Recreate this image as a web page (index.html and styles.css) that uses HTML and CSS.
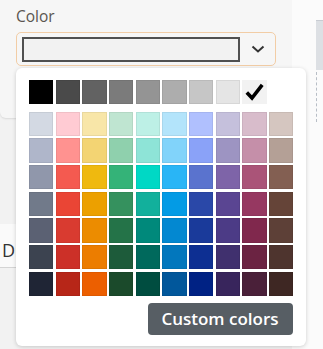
FILE: index.html
```html
<!DOCTYPE html>
<html lang="en">
<head>
<meta charset="utf-8">
<title>Color picker</title>
<link rel="stylesheet" href="styles.css">
</head>
<body>
    <div class="page">
        <div class="main">
            <div class="panel">
                <div class="field-label">Color</div>
                <div class="select">
                    <div class="current"></div>
                    <div class="chevron">
                        <svg width="14" height="8" viewBox="0 0 14 8"><path d="M1.5 1.5 L7 6.5 L12.5 1.5" fill="none" stroke="#333" stroke-width="2"/></svg>
                    </div>
                </div>
            </div>
            <div class="gap-area"></div>
            <div class="tabs">
                <span class="tab">Drivers</span>
            </div>
            <div class="empty">There's no driver statuses</div>
        </div>
        <div class="aside">
            <div class="aside-bar"></div>
            <div class="aside-dash"></div>
        </div>
    </div>

    <div class="popup">
        <div class="grays">
            <div class="sw" style="background:#000000"></div>
            <div class="sw" style="background:#4a4a4a"></div>
            <div class="sw" style="background:#626262"></div>
            <div class="sw" style="background:#7b7b7b"></div>
            <div class="sw" style="background:#949494"></div>
            <div class="sw" style="background:#adadad"></div>
            <div class="sw" style="background:#c6c6c6"></div>
            <div class="sw" style="background:#e5e5e5"></div>
            <div class="sw selected">
                <svg width="19" height="18" viewBox="0 0 19 18"><path d="M1.8 9.5 L7 15 L17.2 1.8" fill="none" stroke="#000" stroke-width="3.6" stroke-linejoin="miter"/></svg>
            </div>
        </div>
        <div class="palette">
            <div class="sw" style="background:#d3d9e3"></div>
            <div class="sw" style="background:#ffcbd3"></div>
            <div class="sw" style="background:#f8e6a8"></div>
            <div class="sw" style="background:#bfe5d1"></div>
            <div class="sw" style="background:#bdf0e6"></div>
            <div class="sw" style="background:#b3e4fb"></div>
            <div class="sw" style="background:#b0c0fe"></div>
            <div class="sw" style="background:#c5c0dc"></div>
            <div class="sw" style="background:#d8bccb"></div>
            <div class="sw" style="background:#d5c6c0"></div>

            <div class="sw" style="background:#afb6ca"></div>
            <div class="sw" style="background:#ff9290"></div>
            <div class="sw" style="background:#f3d473"></div>
            <div class="sw" style="background:#8fd0ad"></div>
            <div class="sw" style="background:#8ee4d7"></div>
            <div class="sw" style="background:#81d3fa"></div>
            <div class="sw" style="background:#8aa2f8"></div>
            <div class="sw" style="background:#9d94c2"></div>
            <div class="sw" style="background:#c58fa9"></div>
            <div class="sw" style="background:#b4a096"></div>

            <div class="sw" style="background:#9097ab"></div>
            <div class="sw" style="background:#f45a50"></div>
            <div class="sw" style="background:#efb90f"></div>
            <div class="sw" style="background:#34b378"></div>
            <div class="sw" style="background:#00d8c5"></div>
            <div class="sw" style="background:#29b5f6"></div>
            <div class="sw" style="background:#5a73ce"></div>
            <div class="sw" style="background:#7e64a8"></div>
            <div class="sw" style="background:#aa5478"></div>
            <div class="sw" style="background:#835f52"></div>

            <div class="sw" style="background:#717a8a"></div>
            <div class="sw" style="background:#ea4535"></div>
            <div class="sw" style="background:#eca000"></div>
            <div class="sw" style="background:#35915e"></div>
            <div class="sw" style="background:#12b09c"></div>
            <div class="sw" style="background:#039be5"></div>
            <div class="sw" style="background:#2a48a8"></div>
            <div class="sw" style="background:#5a4592"></div>
            <div class="sw" style="background:#963861"></div>
            <div class="sw" style="background:#654438"></div>

            <div class="sw" style="background:#5b6173"></div>
            <div class="sw" style="background:#d93b30"></div>
            <div class="sw" style="background:#ec8c00"></div>
            <div class="sw" style="background:#247348"></div>
            <div class="sw" style="background:#00897b"></div>
            <div class="sw" style="background:#0388d1"></div>
            <div class="sw" style="background:#1a3a9a"></div>
            <div class="sw" style="background:#4c3b86"></div>
            <div class="sw" style="background:#80284d"></div>
            <div class="sw" style="background:#5d4037"></div>

            <div class="sw" style="background:#3c4350"></div>
            <div class="sw" style="background:#cc3028"></div>
            <div class="sw" style="background:#ec7d00"></div>
            <div class="sw" style="background:#1d5b3a"></div>
            <div class="sw" style="background:#00695c"></div>
            <div class="sw" style="background:#0277bd"></div>
            <div class="sw" style="background:#0d2f92"></div>
            <div class="sw" style="background:#40306e"></div>
            <div class="sw" style="background:#6b2342"></div>
            <div class="sw" style="background:#4e342e"></div>

            <div class="sw" style="background:#1f2535"></div>
            <div class="sw" style="background:#b72618"></div>
            <div class="sw" style="background:#ec5f00"></div>
            <div class="sw" style="background:#1b4a2b"></div>
            <div class="sw" style="background:#004d40"></div>
            <div class="sw" style="background:#01579b"></div>
            <div class="sw" style="background:#002284"></div>
            <div class="sw" style="background:#38255c"></div>
            <div class="sw" style="background:#4a2039"></div>
            <div class="sw" style="background:#3e2723"></div>
        </div>
        <div class="actions">
            <button class="custom-btn">Custom colors</button>
        </div>
    </div>
</body>
</html>
```

FILE: styles.css
```css
@charset "utf-8";

* {
    margin: 0;
    box-sizing: border-box;
}

html, body {
    height: 100%;
}

body {
    background: #f2f2f2;
    font-family: "Open Sans", "DejaVu Sans", sans-serif;
    color: #444;
    overflow: hidden;
}

.page {
    display: flex;
    height: 100%;
}

.main {
    width: 292px;
    display: flex;
    flex-direction: column;
    background: #f2f2f2;
    box-shadow: 1px 0 2px rgba(0, 0, 0, 0.08);
}

.panel {
    height: 122px;
    background: #f6f6f6;
    border-bottom-left-radius: 6px;
    box-shadow: 0 1px 2px rgba(0, 0, 0, 0.1);
    padding: 5px 16px 0 16px;
}

.field-label {
    font-size: 15.5px;
    line-height: 22px;
    color: #5a5550;
}

.select {
    margin-top: 5px;
    height: 34px;
    border: 1px solid #f2cda6;
    border-radius: 5px;
    display: flex;
    align-items: center;
    padding: 0 0 0 5px;
    background: #f6f6f6;
}

.current {
    width: 218px;
    height: 25px;
    border: 2px solid #505050;
    background: #f2f2f2;
}

.chevron {
    flex: 1;
    display: flex;
    justify-content: center;
    align-items: center;
}

.chevron svg {
    display: block;
}

.gap-area {
    height: 110px;
}

.tabs {
    height: 45px;
    background: #fafafa;
    border-bottom: 1px solid #d4d4d4;
    padding: 14px 0 0 2px;
}

.tab {
    font-size: 18px;
    color: #333;
}

.empty {
    margin-top: 64px;
    padding-left: 70px;
    font-size: 12px;
    color: #777;
}

.aside {
    flex: 1;
    background: #fbfbfb;
    padding: 20px 0 0 24px;
}

.aside-bar {
    height: 50px;
    background: #dde0e4;
    border-top: 1px solid #c8ccd2;
}

.aside-dash {
    margin-top: 2px;
    height: 50px;
    border-left: 1px dashed #b8bec6;
}

.popup {
    position: absolute;
    left: 16px;
    top: 68px;
    width: 290px;
    height: 278px;
    background: #fff;
    border-radius: 6px;
    box-shadow: 0 1px 4px rgba(0, 0, 0, 0.18);
    padding: 12px 13px;
}

.grays {
    display: flex;
    gap: 2.33px;
}

.sw {
    width: 24.33px;
    height: 24.33px;
    box-shadow: inset 0 0 0 1px rgba(0, 0, 0, 0.06);
}

.selected {
    background: #f2f2f2;
    display: flex;
    align-items: center;
    justify-content: center;
    box-shadow: none;
}

.selected svg {
    display: block;
}

.palette {
    margin-top: 7.3px;
    display: grid;
    grid-template-columns: repeat(10, 24.33px);
    gap: 2.33px;
}

.actions {
    display: flex;
    justify-content: flex-end;
    margin-top: 6.7px;
    padding-right: 0.5px;
}

.custom-btn {
    width: 145px;
    height: 32px;
    background: #575e64;
    border: none;
    border-radius: 4px;
    color: #fff;
    font-family: "Open Sans", "DejaVu Sans", sans-serif;
    font-size: 17px;
    font-weight: 600;
    padding: 0;
}
```
